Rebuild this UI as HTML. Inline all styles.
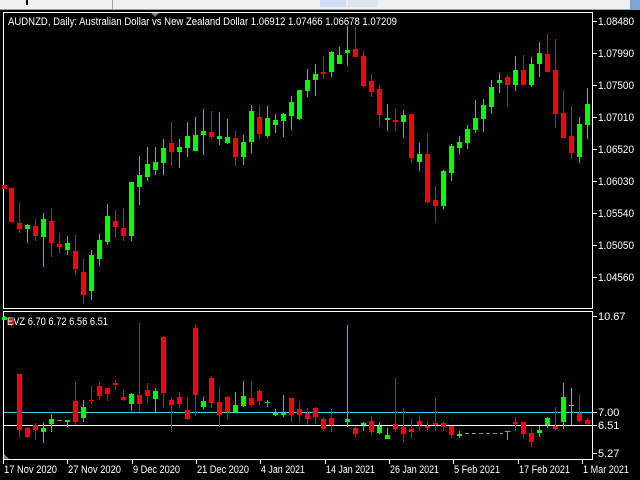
<!DOCTYPE html>
<html><head><meta charset="utf-8"><style>
html,body{margin:0;padding:0;background:#000;width:640px;height:480px;overflow:hidden}
svg{display:block}
text{font-family:"Liberation Sans",sans-serif;font-size:11px;fill:#fff}
</style></head><body>
<svg id="s" width="640" height="480" xmlns="http://www.w3.org/2000/svg">
<rect x="0" y="0" width="640" height="480" fill="#000"/>
<rect x="0" y="0" width="640" height="10" fill="#f0f0f0"/>
<rect x="0" y="9" width="640" height="1" fill="#a0a0a0"/>
<rect x="112" y="0" width="1" height="9" fill="#a0a0a0"/>
<rect x="26" y="0" width="2" height="5" fill="#000"/>
<rect x="320" y="0" width="26" height="7" fill="#cfe0f4"/>
<rect x="348" y="0" width="30" height="7" fill="#dde6f0"/>
<rect x="630" y="0" width="10" height="9" fill="#7aa6d8"/>
<rect x="3.5" y="12.5" width="589" height="296" fill="none" stroke="#fff" stroke-width="1"/>
<rect x="3.5" y="311.5" width="589" height="148" fill="none" stroke="#fff" stroke-width="1"/>
<polygon points="151,13 159,13 155,17" fill="#808080"/>
<polygon points="4,454 4,459 9,459" fill="#808080"/>
<line x1="4" y1="412.5" x2="592" y2="412.5" stroke="#40d0e0" stroke-width="1"/>
<line x1="4" y1="425.5" x2="592" y2="425.5" stroke="#fff" stroke-width="1"/>
<line x1="465" y1="433.5" x2="503" y2="433.5" stroke="#909090" stroke-dasharray="4,3"/>
<g id="c"></g>
<text x="8" y="25" textLength="389" lengthAdjust="spacingAndGlyphs">AUDNZD, Daily:  Australian Dollar vs New Zealand Dollar  1.06912 1.07466 1.06678 1.07209</text>
<text x="7" y="325" textLength="101" lengthAdjust="spacingAndGlyphs">EVZ 6.70 6.72 6.56 6.51</text>
<g id="ax"></g>
</svg>
<script>
var g=document.getElementById('c'),h='';
var main=[[4,185,185,189,189,'r'],[11,188,188,222,222,'r'],[19,203,223,229,233,'r'],[27,224,225,229,243,'g'],[35,219,226,236,241,'r'],[43,213,219,237,267,'g'],[51,208,221,243,257,'r'],[59,233,244,247,253,'r'],[67,236,243,250,255,'g'],[75,235,251,269,275,'r'],[83,259,272,295,304,'r'],[91,250,255,291,300,'g'],[99,234,240,259,266,'g'],[107,204,216,242,245,'g'],[115,210,221,227,238,'r'],[123,208,228,236,241,'r'],[131,182,182,236,241,'g'],[139,156,175,187,205,'g'],[147,147,164,177,181,'g'],[155,147,162,170,175,'g'],[163,139,148,163,175,'g'],[171,122,143,152,166,'r'],[179,139,147,152,168,'g'],[187,122,136,148,157,'g'],[195,117,135,151,151,'g'],[203,109,131,135,155,'g'],[211,111,132,137,139,'r'],[219,112,136,139,145,'g'],[227,119,137,143,144,'g'],[235,131,138,157,166,'r'],[243,135,142,157,165,'g'],[251,105,111,142,153,'g'],[259,105,117,134,139,'r'],[267,106,118,136,138,'g'],[275,114,120,125,133,'g'],[283,113,114,121,137,'g'],[291,96,102,116,130,'g'],[299,90,90,119,120,'g'],[307,69,80,91,97,'g'],[315,64,74,80,96,'g'],[323,56,72,74,79,'r'],[331,51,52,72,77,'g'],[339,47,55,64,64,'g'],[347,26,50,53,66,'g'],[355,27,49,57,57,'r'],[363,51,56,86,87,'r'],[371,74,81,92,97,'r'],[379,85,89,115,127,'r'],[387,104,118,120,131,'g'],[395,108,120,122,131,'r'],[403,110,115,122,138,'g'],[411,114,114,158,163,'r'],[419,143,154,162,171,'g'],[427,133,154,202,203,'r'],[435,186,200,206,223,'r'],[443,170,171,206,209,'g'],[451,144,146,173,181,'g'],[459,136,142,148,154,'g'],[467,125,129,143,149,'g'],[475,100,118,130,133,'g'],[483,99,105,119,132,'g'],[491,80,87,107,113,'g'],[499,73,80,83,93,'g'],[507,75,77,85,107,'r'],[515,56,70,85,91,'g'],[523,55,70,85,85,'r'],[531,57,64,85,87,'g'],[539,42,53,64,77,'g'],[547,34,54,72,72,'r'],[555,39,70,114,128,'r'],[563,91,113,138,138,'r'],[571,106,136,153,159,'r'],[579,117,124,157,163,'g'],[587,88,104,125,139,'g']];
var ind=[[4,316,317,320,320,'g'],[11,319,319,325,327,'r'],[19,374,374,430,437,'r'],[27,427,428,437,438,'r'],[35,423,425,430,440,'r'],[43,423,428,432,443,'g'],[51,414,419,424,432,'g'],[59,420,420,421,421,'t'],[67,420,420,422,427,'g'],[75,382,401,422,425,'r'],[83,400,407,418,422,'g'],[91,386,400,401,404,'r'],[99,382,386,396,400,'r'],[107,388,388,394,401,'r'],[115,380,383,385,390,'r'],[123,390,397,400,401,'r'],[131,393,394,404,411,'g'],[139,323,395,404,412,'r'],[147,383,390,396,403,'r'],[155,388,391,399,412,'g'],[163,336,337,393,408,'r'],[171,398,400,405,432,'r'],[179,392,397,404,408,'r'],[187,397,410,419,420,'r'],[195,324,328,395,416,'r'],[203,397,401,407,409,'g'],[211,376,378,403,408,'r'],[219,387,402,415,427,'r'],[227,396,397,412,420,'r'],[235,392,405,412,413,'g'],[243,381,396,406,407,'g'],[251,381,398,405,407,'r'],[259,389,391,401,405,'r'],[267,400,402,403,407,'g'],[275,409,413,415,416,'g'],[283,395,413,415,417,'g'],[291,398,398,415,422,'r'],[299,401,409,415,423,'r'],[307,408,413,419,425,'r'],[315,407,408,417,424,'r'],[323,417,419,429,431,'r'],[331,409,418,425,432,'r'],[347,325,419,422,427,'g'],[355,426,428,434,437,'r'],[363,422,423,425,431,'g'],[371,416,421,432,435,'r'],[379,422,426,433,434,'g'],[387,428,435,439,439,'g'],[395,378,424,429,432,'r'],[403,408,427,434,442,'r'],[411,419,429,432,438,'r'],[419,415,421,425,431,'r'],[427,422,426,428,430,'r'],[435,398,423,425,431,'r'],[443,421,423,427,431,'r'],[451,426,426,435,438,'r'],[459,431,434,436,438,'g'],[507,431,431,432,440,'g'],[515,417,422,424,431,'r'],[523,422,422,434,438,'r'],[531,428,433,442,447,'r'],[539,426,430,433,437,'g'],[547,417,418,425,428,'g'],[555,407,426,429,430,'r'],[563,383,397,422,429,'g'],[571,388,405,406,425,'n'],[579,395,413,421,423,'r'],[587,418,420,424,425,'r']];
function draw(a){a.forEach(function(c){var col=c[5]=='r'?'#ff0000':c[5]=='g'?'#00ff00':c[5]=='t'?'#c08040':'#a0a0a0';
var x=c[0];h+='<rect x="'+x+'" y="'+c[1]+'" width="1" height="'+Math.max(1,c[4]-c[1])+'" fill="'+col+'"/>';
h+='<rect x="'+(x-2)+'" y="'+c[2]+'" width="5" height="'+Math.max(1,c[3]-c[2])+'" fill="'+col+'"/>';});}
draw(main);draw(ind);g.innerHTML=h;
var ax='',p=['1.08480','1.07990','1.07500','1.07010','1.06520','1.06030','1.05540','1.05050','1.04560'];
p.forEach(function(t,i){var y=21+32*i;ax+='<rect x="593" y="'+y+'" width="4" height="1" fill="#fff"/><text x="598" y="'+(y+4)+'" textLength="36" lengthAdjust="spacingAndGlyphs">'+t+'</text>';});
[['10.67',316],['7.00',412],['6.51',425],['5.27',453]].forEach(function(t){ax+='<rect x="593" y="'+t[1]+'" width="4" height="1" fill="#fff"/><text x="598" y="'+(t[1]+4)+'">'+t[0]+'</text>';});
[['17 Nov 2020',3,53],['27 Nov 2020',67,53],['9 Dec 2020',132,47],['21 Dec 2020',196,52],['4 Jan 2021',260,44],['14 Jan 2021',325,49],['26 Jan 2021',389,49],['5 Feb 2021',453,46],['17 Feb 2021',518,51],['1 Mar 2021',582,46]].forEach(function(t){ax+='<rect x="'+t[1]+'" y="460" width="1" height="4" fill="#fff"/><text x="'+(t[1]+1)+'" y="473" textLength="'+t[2]+'" lengthAdjust="spacingAndGlyphs">'+t[0]+'</text>';});
document.getElementById('ax').innerHTML=ax;
</script>
</body></html>
